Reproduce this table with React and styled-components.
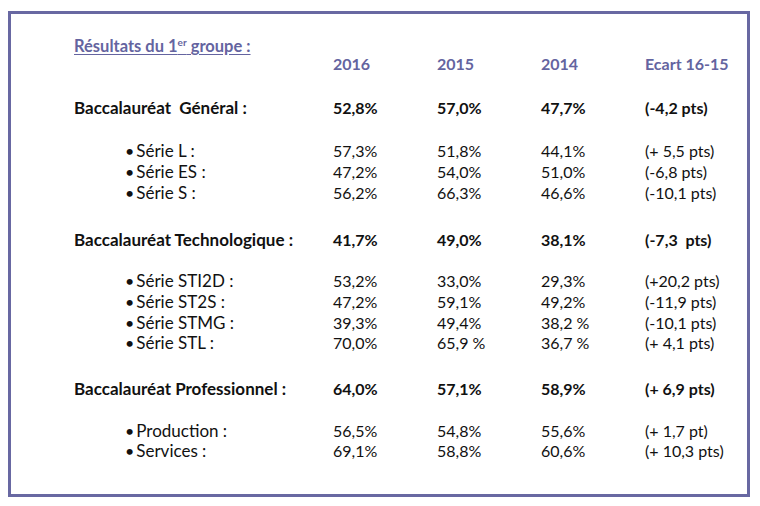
import React from 'react'
import styled, { createGlobalStyle } from 'styled-components'

const Global = createGlobalStyle`
  html, body { margin: 0; padding: 0; background: #ffffff; }
  body { font-family: Lato, "Open Sans", sans-serif; color: #111; }
`

const Frame = styled.div`
  box-sizing: border-box;
  margin: 11px 0 0 8px;
  width: 742px;
  height: 486px;
  border: 3px solid #6868a2;
  padding: 22px 0 0 63px;
`

const Title = styled.div`
  color: #6464a0;
  font-weight: 700;
  font-size: 16.5px;
  height: 18px;
  line-height: 21px;
  text-decoration: underline;
  text-underline-offset: 2px;
  sup { font-size: 10px; line-height: 0; vertical-align: 6px; }
`

const Row = styled.div`
  display: grid;
  grid-template-columns: ${p => (p.$sub ? '51px 208px' : '259px')} 104px 104px 104px auto;
  height: 20.7px;
  line-height: 20.7px;
  font-size: 16px;
  font-weight: ${p => (p.$bold ? 700 : 400)};
  color: ${p => (p.$head ? '#6464a0' : '#111')};
  margin-top: ${p => p.$gap || 0}px;
  white-space: pre;
`

const Label = styled.span`
  font-size: 17px;
`

const Bullet = styled(Label)`
  grid-column: 2;
  &::before { content: '•'; margin-right: 2px; font-size: 16px; }
`

const groups = [
  {
    label: 'Baccalauréat  Général :',
    vals: ['52,8%', '57,0%', '47,7%', '(-4,2 pts)'],
    gap: 23,
    subGap: 23,
    subs: [
      ['Série L :', '57,3%', '51,8%', '44,1%', '(+ 5,5 pts)'],
      ['Série ES :', '47,2%', '54,0%', '51,0%', '(-6,8 pts)'],
      ['Série S :', '56,2%', '66,3%', '46,6%', '(-10,1 pts)'],
    ],
  },
  {
    label: 'Baccalauréat Technologique :',
    vals: ['41,7%', '49,0%', '38,1%', '(-7,3  pts)'],
    gap: 27,
    subGap: 20,
    subs: [
      ['Série STI2D :', '53,2%', '33,0%', '29,3%', '(+20,2 pts)'],
      ['Série ST2S :', '47,2%', '59,1%', '49,2%', '(-11,9 pts)'],
      ['Série STMG :', '39,3%', '49,4%', '38,2 %', '(-10,1 pts)'],
      ['Série STL :', '70,0%', '65,9 %', '36,7 %', '(+ 4,1 pts)'],
    ],
  },
  {
    label: 'Baccalauréat Professionnel :',
    vals: ['64,0%', '57,1%', '58,9%', '(+ 6,9 pts)'],
    gap: 25,
    subGap: 21,
    subs: [
      ['Production :', '56,5%', '54,8%', '55,6%', '(+ 1,7 pt)'],
      ['Services :', '69,1%', '58,8%', '60,6%', '(+ 10,3 pts)'],
    ],
  },
]

export default function App() {
  return (
    <>
      <Global />
      <Frame>
        <Title>Résultats du 1<sup>er</sup> groupe :</Title>
        <Row $head $bold>
          <span />
          <span>2016</span>
          <span>2015</span>
          <span>2014</span>
          <span>Ecart 16-15</span>
        </Row>
        {groups.map(g => (
          <React.Fragment key={g.label}>
            <Row $bold $gap={g.gap}>
              <Label>{g.label}</Label>
              {g.vals.map((v, i) => <span key={i}>{v}</span>)}
            </Row>
            {g.subs.map((s, si) => (
              <Row key={s[0]} $sub $gap={si === 0 ? g.subGap : 0}>
                <Bullet>{s[0]}</Bullet>
                {s.slice(1).map((v, i) => <span key={i}>{v}</span>)}
              </Row>
            ))}
          </React.Fragment>
        ))}
      </Frame>
    </>
  )
}
